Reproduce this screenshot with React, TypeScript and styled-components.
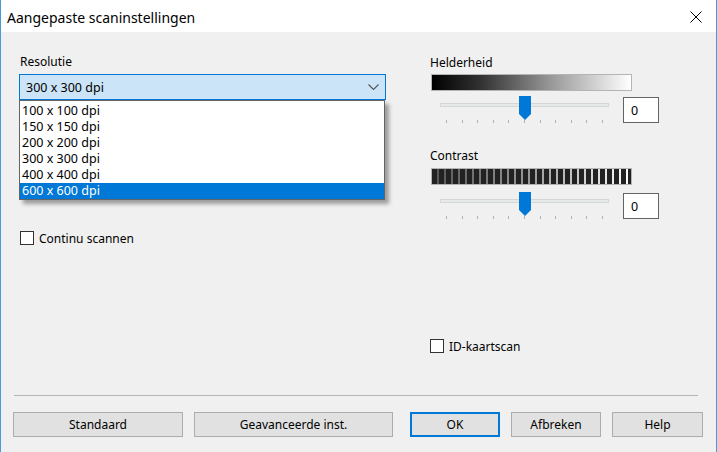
import React, { useState } from 'react';
import styled, { createGlobalStyle } from 'styled-components';

const GlobalStyle = createGlobalStyle`
  html, body {
    margin: 0;
    padding: 0;
    background: #f0f0f0;
  }
  body {
    font-family: "Noto Sans", "DejaVu Sans", sans-serif;
    font-size: 12px;
    color: #000;
  }
  * {
    box-sizing: border-box;
  }
`;

const resolutions = [
  '100 x 100 dpi',
  '150 x 150 dpi',
  '200 x 200 dpi',
  '300 x 300 dpi',
  '400 x 400 dpi',
  '600 x 600 dpi'
];

const buttons = [
  { label: 'Standaard', width: 170 },
  { label: 'Geavanceerde inst.', width: 199 },
  { label: 'OK', width: 90, primary: true },
  { label: 'Afbreken', width: 90 },
  { label: 'Help', width: 91 }
];

function Slider ({ value, offset = 0 }: { value: number; offset?: number }): React.ReactElement {
  const left = 6 + ((value + 50) / 100) * 157 - 6;

  return (
    <SliderRow $offset={offset}>
      <SliderArea>
        <Track />
        <Ticks>
          {Array.from({ length: 11 }).map((_, i) => <Tick key={i} />)}
        </Ticks>
        <Thumb style={{ left }} width='12' height='24' viewBox='0 0 12 24'>
          <path d='M0 0 H12 V18 L6 24 L0 18 Z' fill='#0078d7' />
        </Thumb>
      </SliderArea>
      <ValueBox>{value}</ValueBox>
    </SliderRow>
  );
}

export default function App (): React.ReactElement {
  const [selected] = useState(5);

  return (
    <>
      <GlobalStyle />
      <Window>
        <TitleBar>
          <Title>Aangepaste scaninstellingen</Title>
          <svg width='12' height='12' viewBox='0 0 12 12'>
            <path d='M0.5 0.5 L11.5 11.5 M11.5 0.5 L0.5 11.5' stroke='#000' strokeWidth='1' />
          </svg>
        </TitleBar>
        <Body>
          <Columns>
            {/* left column */}
            <LeftColumn>
              <Label>Resolutie</Label>
              <ComboWrap>
                <Combo>
                  <span>300 x 300 dpi</span>
                  <svg width='11' height='6' viewBox='0 0 11 6'>
                    <path d='M0.5 0.5 L5.5 5.5 L10.5 0.5' stroke='#555' strokeWidth='1.1' fill='none' />
                  </svg>
                </Combo>
                <DropList>
                  {resolutions.map((r, i) => (
                    <DropItem key={r} $active={i === selected}>{r}</DropItem>
                  ))}
                </DropList>
              </ComboWrap>
              <CheckRow $top={130}>
                <CheckBox />
                <span>Continu scannen</span>
              </CheckRow>
            </LeftColumn>
            {/* right column */}
            <RightColumn>
              <Label $top={1}>Helderheid</Label>
              <GradientBar />
              <Slider value={0} />
              <Label $top={24}>Contrast</Label>
              <ContrastBar />
              <Slider value={0} offset={2} />
              <CheckRow $top={118}>
                <CheckBox />
                <span>ID-kaartscan</span>
              </CheckRow>
            </RightColumn>
          </Columns>
          <Footer>
            <Separator />
            <ButtonRow>
              {buttons.map((b) => (
                <Button key={b.label} $width={b.width} $primary={b.primary}>{b.label}</Button>
              ))}
            </ButtonRow>
          </Footer>
        </Body>
      </Window>
    </>
  );
}

const Window = styled.div`
  display: flex;
  flex-direction: column;
  width: 717px;
  height: 452px;
  border-left: 1px solid #4a9ad8;
  border-right: 1px solid #4a9ad8;
  background: #f0f0f0;
  overflow: hidden;
`;

const TitleBar = styled.div`
  display: flex;
  align-items: center;
  justify-content: space-between;
  height: 32px;
  padding: 2px 14px 0 6px;
  background: #fff;
`;

const Title = styled.div`
  font-size: 14px;
  color: #000;
`;

const Body = styled.div`
  flex: 1;
  display: flex;
  flex-direction: column;
`;

const Columns = styled.div`
  display: flex;
  padding: 22px 0 0 18px;
`;

const LeftColumn = styled.div`
  display: flex;
  flex-direction: column;
  width: 367px;
`;

const RightColumn = styled.div`
  display: flex;
  flex-direction: column;
  margin-left: 43px;
  width: 240px;
`;

const Label = styled.div<{ $top?: number }>`
  line-height: 16px;
  height: 16px;
  margin-top: ${(p) => p.$top ?? 0}px;
  padding-left: 1px;
`;

const ComboWrap = styled.div`
  position: relative;
  margin-top: 4px;
`;

const Combo = styled.div`
  display: flex;
  align-items: center;
  justify-content: space-between;
  height: 26px;
  padding: 0 6px 0 6px;
  border: 1px solid #0078d7;
  background: #cce4f7;
  font-size: 12.5px;
`;

const DropList = styled.div`
  position: absolute;
  top: 26px;
  left: 0;
  width: 366px;
  padding: 2px 0 0;
  background: #fff;
  border: 1px solid #646464;
  box-shadow: 4px 4px 4px rgba(0, 0, 0, 0.35);
  z-index: 2;
`;

const DropItem = styled.div<{ $active?: boolean }>`
  height: 16px;
  line-height: 16px;
  padding-left: 2px;
  font-size: 12.5px;
  background: ${(p) => (p.$active ? '#0078d7' : 'transparent')};
  color: ${(p) => (p.$active ? '#fff' : '#000')};
`;

const CheckRow = styled.div<{ $top: number }>`
  display: flex;
  align-items: center;
  gap: 5px;
  margin-top: ${(p) => p.$top}px;
  padding-left: 1px;
  height: 16px;
`;

const CheckBox = styled.span`
  display: inline-block;
  width: 14px;
  height: 14px;
  border: 1px solid #333;
  background: #fff;
`;

const GradientBar = styled.div`
  margin-top: 3px;
  width: 201px;
  height: 17px;
  margin-left: 2px;
  border: 1px solid #b4b4b4;
  background: linear-gradient(to right, #000 0%, #333 25%, #999 60%, #fff 100%);
`;

const ContrastBar = styled.div`
  margin-top: 4px;
  width: 201px;
  height: 17px;
  margin-left: 2px;
  border: 1px solid #b4b4b4;
  background:
    repeating-linear-gradient(to right, #222 0, #222 5px, transparent 5px, transparent 7px),
    linear-gradient(to right, #555 0%, #999 50%, #fff 100%);
`;

const SliderRow = styled.div<{ $offset: number }>`
  display: flex;
  align-items: flex-start;
  margin-top: ${(p) => 5 + p.$offset}px;
  height: 28px;
`;

const SliderArea = styled.div`
  position: relative;
  display: flex;
  flex-direction: column;
  width: 169px;
  margin-left: 11px;
`;

const Track = styled.div`
  margin-top: 7px;
  height: 4px;
  background: #e7eaea;
  border: 1px solid #d6d6d6;
`;

const Ticks = styled.div`
  display: flex;
  justify-content: space-between;
  margin-top: 13px;
  padding: 0 6px;
`;

const Tick = styled.span`
  width: 1px;
  height: 3px;
  background: #b0b0b0;
`;

const Thumb = styled.svg`
  position: absolute;
  top: 0;
`;

const ValueBox = styled.div`
  display: flex;
  align-items: center;
  margin-left: 14px;
  margin-top: 1px;
  width: 36px;
  height: 26px;
  padding-left: 7px;
  background: #fff;
  border: 1px solid #646464;
  font-size: 12.5px;
`;

const Footer = styled.div`
  margin-top: auto;
  padding: 0 0 15px 12px;
`;

const Separator = styled.div`
  width: 684px;
  margin-left: 1px;
  border-top: 1px solid #b5b5b5;
`;

const ButtonRow = styled.div`
  display: flex;
  gap: 11px;
  margin-top: 16px;
  & > :nth-child(3) {
    margin-left: 6px;
  }
`;

const Button = styled.button<{ $width: number; $primary?: boolean }>`
  width: ${(p) => p.$width}px;
  height: 25px;
  padding: 0;
  font-family: inherit;
  font-size: 12px;
  color: #000;
  background: #e1e1e1;
  border: ${(p) => (p.$primary ? '2px solid #0078d7' : '1px solid #adadad')};
`;
